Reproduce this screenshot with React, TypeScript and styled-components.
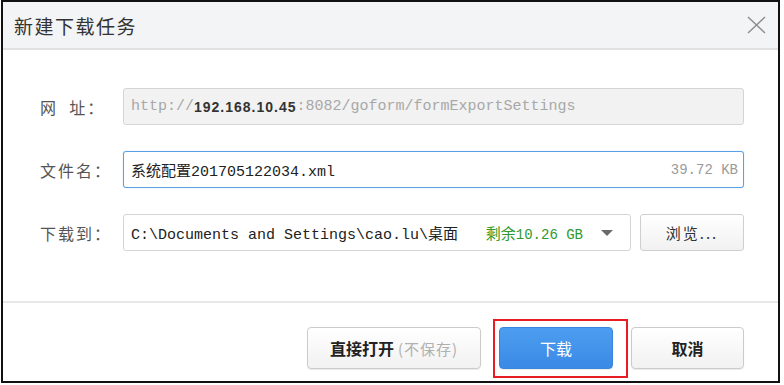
import React from "react";
import styled, { createGlobalStyle } from "styled-components";

const Global = createGlobalStyle`
  html, body { margin: 0; padding: 0; background: #fff; }
  body { font-family: "Noto Sans CJK SC", "Noto Sans", sans-serif; }
  * { box-sizing: border-box; }
`;

const Dialog = styled.div`
  margin-left: 1px;
  width: 779px;
  height: 383px;
  border: 2px solid #111;
  background: #fff;
  display: flex;
  flex-direction: column;
`;

const Header = styled.div`
  height: 48px;
  background: #f3f4f6;
  border-bottom: 2px solid #e0e1e3;
  display: flex;
  align-items: center;
  justify-content: space-between;
  padding: 0 12px 0 11px;
  flex-shrink: 0;
`;

const Title = styled.div`
  font-size: 19px;
  color: #333;
  letter-spacing: 1.5px;
`;

const Close = styled.button`
  border: none;
  background: none;
  padding: 0;
  width: 20px;
  height: 20px;
  display: flex;
  align-items: center;
  justify-content: center;
  cursor: pointer;
`;

const Body = styled.div`
  padding: 38px 34px 0 37px;
  display: flex;
  flex-direction: column;
  gap: 26px;
  height: 253px;
  border-bottom: 2px solid #e8e8e8;
  flex-shrink: 0;
`;

const Row = styled.div`
  display: flex;
  align-items: center;
  height: 37px;
`;

const Label = styled.div`
  width: 83px;
  font-size: 16px;
  color: #555;
  letter-spacing: 2px;
  white-space: pre;
  flex-shrink: 0;
`;

const Field = styled.div<{ $disabled?: boolean; $focus?: boolean }>`
  flex: 1;
  height: 37px;
  display: flex;
  align-items: center;
  padding: 0 5px 0 7px;
  border: 1px solid ${(p) => (p.$focus ? "#5aa0e6" : "#d5d5d5")};
  border-radius: 3px;
  background: ${(p) => (p.$disabled ? "#f2f2f2" : "#fff")};
  box-shadow: ${(p) => (p.$focus ? "0 0 1px #9cc6f0" : "none")};
  font-family: "Liberation Mono", "Noto Sans CJK SC", monospace;
  font-size: 15px;
  white-space: pre;
  overflow: hidden;
`;

const Muted = styled.span`
  color: #a8a8a8;
`;

const Strong = styled.span`
  color: #333;
  font-family: "Liberation Sans", sans-serif;
  font-weight: bold;
  font-size: 14px;
  letter-spacing: 1px;
`;

const Cjk = styled.span`
  font-family: "Noto Sans CJK SC", sans-serif;
  font-size: 15px;
`;

const Text = styled.span`
  color: #222;
  flex: 1;
`;

const Size = styled.span`
  color: #9a9a9a;
  font-size: 14px;
`;

const Free = styled.span`
  color: #2f9a2f;
  margin-left: 14px;
  font-size: 14px;
`;

const Caret = styled.span`
  margin-left: 18px;
  width: 0;
  height: 0;
  border-left: 6px solid transparent;
  border-right: 6px solid transparent;
  border-top: 6px solid #6a6a6a;
`;

const CaretPad = styled.span`
  width: 12px;
`;

const SelectField = styled(Field)`
  flex: 0 0 508px;
`;

const Browse = styled.button`
  margin-left: 9px;
  flex: 1;
  height: 37px;
  border: 1px solid #cfcfcf;
  border-radius: 3px;
  background: linear-gradient(#ffffff, #f1f1f1);
  font-family: "Noto Sans CJK SC", sans-serif;
  font-size: 15px;
  color: #333;
  letter-spacing: 2px;
`;

const Footer = styled.div`
  flex: 1;
  display: flex;
  justify-content: flex-end;
  align-items: flex-start;
  padding: 24px 34px 0 0;
  gap: 18px;
`;

const Button = styled.button<{ $primary?: boolean; $w: number }>`
  width: ${(p) => p.$w}px;
  height: 42px;
  border-radius: 4px;
  border: 1px solid ${(p) => (p.$primary ? "#3a86dc" : "#cbcbcb")};
  background: ${(p) =>
    p.$primary
      ? "linear-gradient(#4d9ef0, #3a8ae6)"
      : "linear-gradient(#ffffff, #f1f1f1)"};
  color: ${(p) => (p.$primary ? "#fff" : "#222")};
  font-family: "Noto Sans CJK SC", sans-serif;
  font-size: 16px;
  font-weight: ${(p) => (p.$primary ? 400 : 700)};
  box-shadow: 0 1px 1px rgba(0, 0, 0, 0.08);
  cursor: pointer;
`;

const Hint = styled.span`
  color: #b0b0b0;
  font-weight: 400;
  font-size: 15px;
  margin-left: 4px;
  letter-spacing: 1px;
`;

const Marked = styled.span`
  position: relative;
  display: inline-flex;
`;

const Outline = styled.span`
  position: absolute;
  left: -6px;
  top: -8px;
  right: -15px;
  bottom: -9px;
  border: 2px solid rgb(230, 30, 35);
  pointer-events: none;
`;

export default function App() {
  return (
    <>
      <Global />
      <Dialog>
        <Header>
          <Title>新建下载任务</Title>
          <Close aria-label="关闭">
            <svg width="19" height="18" viewBox="0 0 19 18">
              <path d="M1 1 L18 17 M18 1 L1 17" stroke="#8c8c8c" strokeWidth="1.4" fill="none" />
            </svg>
          </Close>
        </Header>
        <Body>
          <Row>
            <Label>{"网  址："}</Label>
            <Field $disabled>
              <Muted>http://</Muted>
              <Strong>192.168.10.45</Strong>
              <Muted>:8082/goform/formExportSettings</Muted>
            </Field>
          </Row>
          <Row>
            <Label>文件名：</Label>
            <Field $focus>
              <Text>
                <Cjk>系统配置</Cjk>201705122034.xml
              </Text>
              <Size>39.72 KB</Size>
            </Field>
          </Row>
          <Row>
            <Label>下载到：</Label>
            <SelectField>
              <Text>
                C:\Documents and Settings\cao.lu\<Cjk>桌面</Cjk>
              </Text>
              <Free>
                <Cjk>剩余</Cjk>10.26 GB
              </Free>
              <Caret />
              <CaretPad />
            </SelectField>
            <Browse>浏览...</Browse>
          </Row>
        </Body>
        <Footer>
          <Button $w={174}>
            直接打开<Hint>(不保存)</Hint>
          </Button>
          <Marked>
            <Button $primary $w={114}>下载</Button>
            <Outline />
          </Marked>
          <Button $w={113}>取消</Button>
        </Footer>
      </Dialog>
    </>
  );
}
